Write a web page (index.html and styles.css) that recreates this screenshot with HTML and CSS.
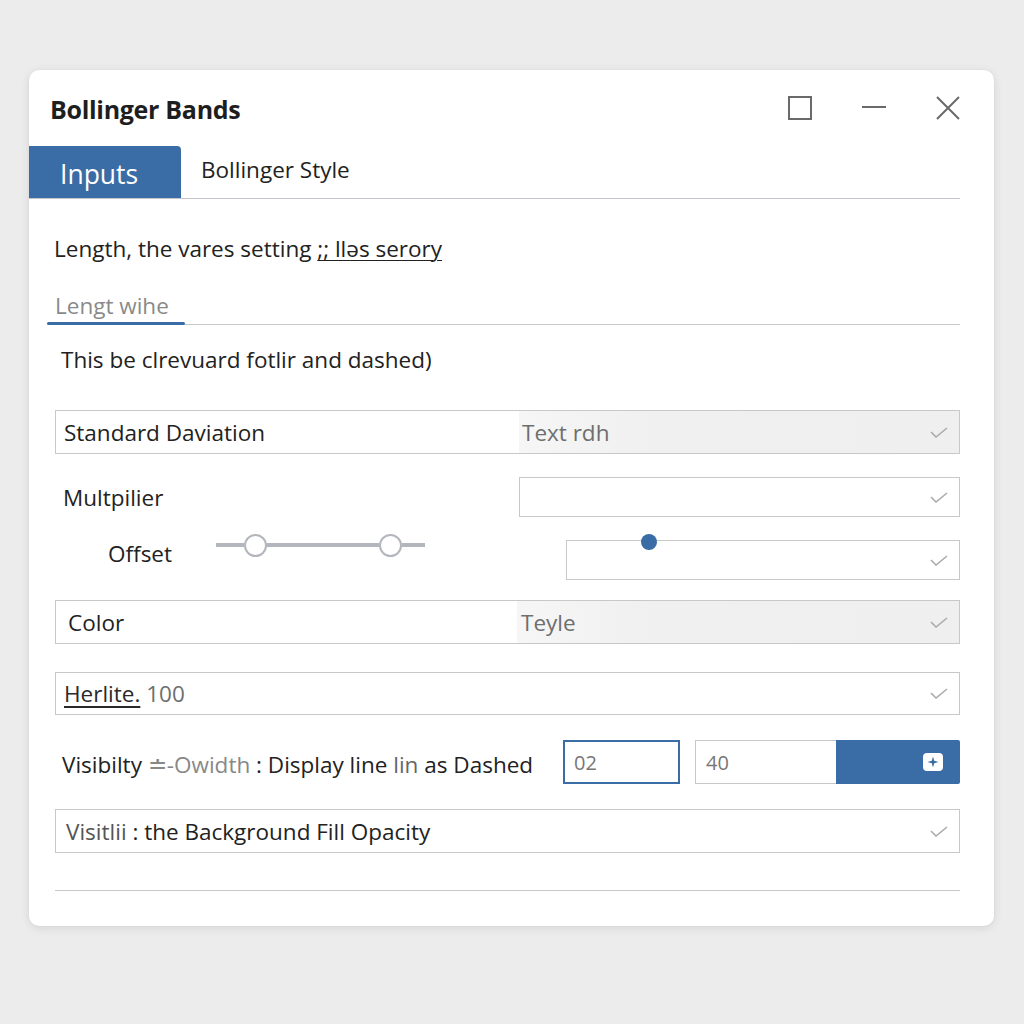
FILE: index.html
```html
<!DOCTYPE html>
<html lang="en">
<head>
<meta charset="utf-8">
<title>Bollinger Bands</title>
<link rel="stylesheet" href="styles.css">
</head>
<body>
<div class="dialog">
  <div class="header">
    <div class="title">Bollinger Bands</div>
    <div class="win-icons">
      <svg class="wicon" viewBox="0 0 24 24"><rect x="1" y="1" width="22" height="22" fill="none" stroke="#6a6a6a" stroke-width="2"/></svg>
      <svg class="wicon" viewBox="0 0 24 24"><line x1="0" y1="11" x2="25" y2="11" stroke="#6a6a6a" stroke-width="2"/></svg>
      <svg class="wicon" viewBox="0 0 24 24"><path d="M1 1 L23 23 M23 1 L1 23" stroke="#6a6a6a" stroke-width="2" fill="none"/></svg>
    </div>
  </div>
  <div class="tabs">
    <div class="tab active">Inputs</div>
    <div class="tab">Bollinger Style</div>
  </div>
  <div class="content">
    <div class="line l1">Length, the vares setting <span class="ul">;; lləs serory</span></div>
    <div class="field">
      <div class="field-text">Lengt wihe</div>
      <div class="field-line"><span class="blue-bar"></span><span class="gray-bar"></span></div>
    </div>
    <div class="line l3">This be clrevuard fotlir and dashed)</div>

    <div class="box split r-std">
      <div class="left">Standard Daviation</div>
      <div class="right gray"><span class="muted">Text rdh</span><svg class="chk" viewBox="0 0 18 11"><polyline points="1,5 6,10 17,1" fill="none" stroke="#ababab" stroke-width="1.6"/></svg></div>
    </div>

    <div class="row r-mult">
      <div class="lbl">Multpilier</div>
      <div class="box sel"><svg class="chk" viewBox="0 0 18 11"><polyline points="1,5 6,10 17,1" fill="none" stroke="#ababab" stroke-width="1.6"/></svg></div>
    </div>

    <div class="row r-off">
      <div class="lbl off">Offset</div>
      <div class="slider">
        <span class="track t1"></span><span class="knob"></span><span class="track t2"></span><span class="knob"></span><span class="track t3"></span>
      </div>
      <div class="box sel off-box"><span class="dot"></span><svg class="chk" viewBox="0 0 18 11"><polyline points="1,5 6,10 17,1" fill="none" stroke="#ababab" stroke-width="1.6"/></svg></div>
    </div>

    <div class="box split r-color">
      <div class="left c">Color</div>
      <div class="right gray c2"><span class="muted">Teyle</span><svg class="chk" viewBox="0 0 18 11"><polyline points="1,5 6,10 17,1" fill="none" stroke="#ababab" stroke-width="1.6"/></svg></div>
    </div>

    <div class="box full r-hex">
      <span class="hex"><span class="ul2">Herlite.</span> <span class="muted">100</span></span>
      <svg class="chk" viewBox="0 0 18 11"><polyline points="1,5 6,10 17,1" fill="none" stroke="#ababab" stroke-width="1.6"/></svg>
    </div>

    <div class="row r-vis">
      <div class="lbl vis">Visibilty <span class="faint">≐-Owidth</span> : Display line <span class="faint2">lin</span> as Dashed</div>
      <div class="num active-num">02</div>
      <div class="num-group">
        <div class="num plain">40</div>
        <div class="btn"><svg class="btn-icon" viewBox="0 0 20 18"><rect x="0" y="0" width="20" height="18" rx="4" fill="#fff"/><path d="M10 3.5 L11.2 7.8 L15.5 9 L11.2 10.2 L10 14.5 L8.8 10.2 L4.5 9 L8.8 7.8 Z" fill="#3a6ca6"/></svg></div>
      </div>
    </div>

    <div class="box full r-last">
      <span class="lasttext"><span class="faint3">Visitlii</span> : the Background Fill Opacity</span>
      <svg class="chk" viewBox="0 0 18 11"><polyline points="1,5 6,10 17,1" fill="none" stroke="#ababab" stroke-width="1.6"/></svg>
    </div>

    <div class="bottom-line"></div>
  </div>
</div>
</body>
</html>
```

FILE: styles.css
```css
* { box-sizing: border-box; }
html, body { margin: 0; padding: 0; }
body {
  background: #ececec;
  font-family: "Open Sans", "Noto Sans", sans-serif;
  color: #222;
  width: 1024px;
  height: 1024px;
  overflow: hidden;
}
.dialog {
  width: 965px;
  height: 856px;
  margin: 70px 0 0 29px;
  background: #fff;
  border-radius: 10px;
  box-shadow: 0 2px 10px rgba(0,0,0,0.10), 0 0 2px rgba(0,0,0,0.06);
  display: flex;
  flex-direction: column;
}
.header {
  height: 76px;
  display: flex;
  align-items: center;
  justify-content: space-between;
  padding: 2px 34px 0 21px;
}
.title {
  font-size: 25px;
  font-weight: 700;
  color: #1e1e1e;
  letter-spacing: -0.3px;
}
.win-icons {
  display: flex;
  gap: 50px;
  align-items: center;
  margin-top: -2px;
}
.wicon { width: 24px; height: 24px; display: block; }
.tabs {
  height: 53px;
  display: flex;
  align-items: stretch;
  margin-right: 34px;
  border-bottom: 1px solid #c4c6cc;
}
.tab {
  font-size: 22.5px;
  display: flex;
  align-items: center;
  padding: 0 0 6px 20px;
  color: #222;
}
.tab.active {
  width: 152px;
  background: #3a6ca6;
  color: #fff;
  font-size: 26.5px;
  padding: 4px 0 0 31px;
  border-radius: 0 4px 0 0;
}
.content {
  padding: 0 34px 0 26px;
  display: flex;
  flex-direction: column;
}
.line { font-size: 22.5px; line-height: 28px; }
.l1 { margin-top: 36px; margin-left: -1px; }
.ul { text-decoration: underline; text-underline-offset: 3px; text-decoration-thickness: 1px; }
.field { margin-top: 29px; margin-left: -8px; }
.field-text { font-size: 22.5px; line-height: 28px; color: #8a8a8a; padding-left: 8px; }
.field-line { display: flex; align-items: flex-end; height: 5px; }
.blue-bar { width: 138px; height: 3px; background: #3a6ca6; border-radius: 2px; }
.gray-bar { flex: 1; height: 1px; background: #c8c8c8; }
.l3 { margin-top: 21px; padding-left: 6px; }

.box {
  border: 1px solid #c8c8c8;
  background: #fff;
  display: flex;
  align-items: center;
  font-size: 22.5px;
}
.split { height: 44px; margin-top: 36px; }
.split .left { width: 463px; padding-left: 8px; }
.split .right {
  flex: 1;
  height: 100%;
  display: flex;
  align-items: center;
  justify-content: space-between;
  padding: 0 11px 0 3px;
}
.gray { background: linear-gradient(to right, #f6f6f6, #f0f0f0 30%, #efefef); }
.muted { color: #6e6e6e; }
.chk { width: 18px; height: 11px; display: block; flex: none; }
.r-color { margin-top: 20px; }
.split .left.c { width: 461px; padding-left: 12px; }
.split .right.c2 { padding-left: 4px; }

.row { display: flex; }
.r-mult { margin-top: 23px; height: 40px; align-items: center; }
.r-mult .lbl { width: 464px; font-size: 22.5px; padding-left: 8px; }
.sel { flex: 1; height: 40px; justify-content: flex-end; padding-right: 11px; }

.r-off { margin-top: 23px; height: 40px; align-items: flex-start; }
.lbl.off { width: 161px; font-size: 22.5px; line-height: 28px; padding-left: 53px; }
.slider { width: 209px; height: 22px; margin-top: -6px; display: flex; align-items: center; }
.track { height: 4px; background: #b3b6bd; display: block; }
.t1 { width: 28px; }
.t2 { flex: 1; }
.t3 { width: 23px; }
.knob { width: 23px; height: 23px; border-radius: 50%; border: 2px solid #b3b6bd; background: #fff; display: block; }
.off-box { margin-left: 141px; position: relative; }
.dot {
  position: absolute;
  left: 74px;
  top: -7px;
  width: 16px;
  height: 16px;
  border-radius: 50%;
  background: #3a6ca6;
}

.full { height: 44px; justify-content: space-between; padding: 0 11px 0 8px; }
.r-hex { margin-top: 28px; height: 43px; }
.ul2 { text-decoration: underline; text-underline-offset: 4px; text-decoration-thickness: 2px; color: #2a2a2a; }

.r-vis { margin-top: 25px; height: 44px; align-items: center; }
.lbl.vis { flex: 1; font-size: 22.5px; padding-left: 7px; padding-top: 4px; white-space: nowrap; }
.faint { color: #888; }
.faint2 { color: #666; }
.num {
  height: 44px;
  font-size: 20px;
  color: #777;
  display: flex;
  align-items: center;
}
.active-num { width: 117px; border: 2px solid #3a6ca6; padding-left: 9px; }
.num-group { display: flex; margin-left: 15px; }
.plain { width: 141px; border: 1px solid #c8c8c8; border-right: none; padding-left: 10px; }
.btn {
  width: 124px;
  height: 44px;
  background: #3a6ca6;
  border-radius: 0 2px 2px 0;
  display: flex;
  align-items: center;
  justify-content: flex-end;
  padding-right: 17px;
}
.btn-icon { width: 20px; height: 18px; display: block; }

.r-last { margin-top: 25px; padding-left: 10px; }
.faint3 { color: #555; }
.bottom-line { margin-top: 37px; height: 1px; background: #c8c8c8; }
```
